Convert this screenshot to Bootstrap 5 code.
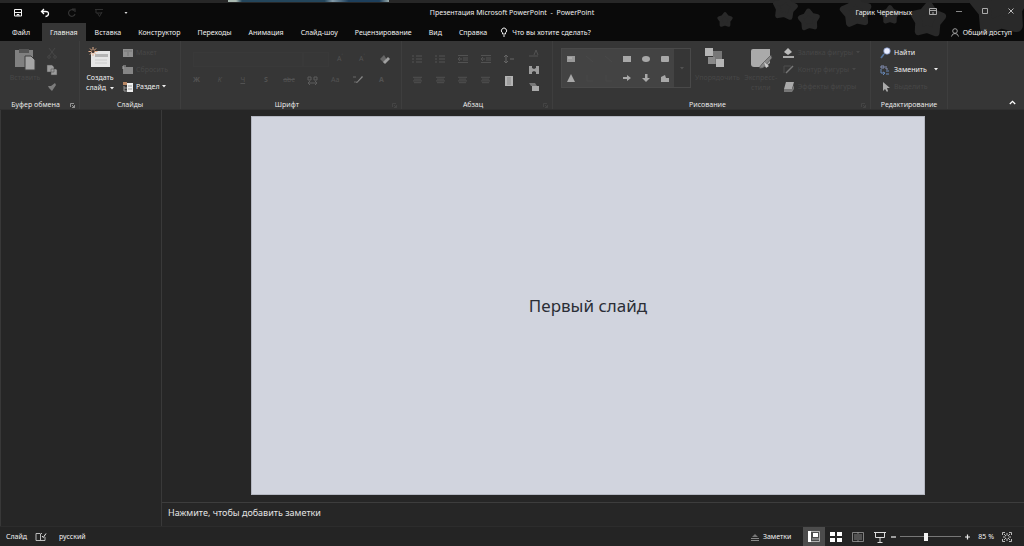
<!DOCTYPE html>
<html lang="ru">
<head>
<meta charset="utf-8">
<meta name="viewport" content="width=device-width, initial-scale=1">
<title>Презентация Microsoft PowerPoint - PowerPoint</title>
<link href="https://cdn.jsdelivr.net/npm/bootstrap@5.3.0/dist/css/bootstrap.min.css" rel="stylesheet">
<style>
  body { font-family: "Noto Sans", "Open Sans", sans-serif; font-size: 7px; line-height: 10px; background: #262626; color: #f0f0f0; }
  button, select, input, a { font: inherit; }
  svg { display: block; flex: none; }
  .tool { background: none; border: 0; padding: 0; color: inherit; display: flex; align-items: center; justify-content: center; border-radius: 0; }
  .desk-strip { height: 3px; background: #272727; }
  .desk-strip span { display: block; width: 161px; height: 2px; margin-left: 228px; background: linear-gradient(90deg, #a9b8b0 0 8px, #24465c 14px 60%, #8199a6 65%, #1d3f5c 75% 94%, #9aa); }
  .top { background: #0a0a0a; position: relative; }
  .stars { position: absolute; right: 0; top: 0; }
  .titlebar { height: 20px; position: relative; display: grid; grid-template-columns: 1fr auto 1fr; }
  .window-title { white-space: pre; }
  .quick { gap: 17px; padding-left: 13px; }
  .quick svg { width: 10px; height: 10px; }
  .tabs { height: 18px; position: relative; padding-left: 4px; }
  .tabs a { color: #f0f0f0; text-decoration: none; padding: 0 8px; line-height: 19px; margin-right: 1px; }
  .tabs a.active { background: #363636; }
  .tabs a.hint { padding-left: 4px; }
  .ribbon { background: #363636; height: 69px; border-bottom: 1px solid #303030; }
  .group { border-right: 1px solid #3e3e3e; padding-top: 3px; }
  .group-body { height: 56px; }
  .group-name { height: 10px; line-height: 9px; position: relative; text-align: center; font-family: "Open Sans", sans-serif; }
  .launch { position: absolute; right: 4px; top: 3px; }
  .g-clip { width: 80px; } .g-slides { width: 101px; } .g-font { width: 221px; } .g-par { width: 151px; } .g-draw { width: 318px; } .g-edit { width: 77px; }
  .stack3 { display: grid; grid-template-rows: repeat(3, 17px); justify-items: start; align-content: start; }
  .stack3 .tool { gap: 3px; }
  .g-slides .stack3 { padding-left: 6px; }
  .g-slides .stack3 .tool { gap: 2px; }
  .big { flex-direction: column; justify-content: flex-start; padding-top: 3px; }
  .off { color: #474747; }
  .faint { color: #525252; }
  .toolrow { display: grid; height: 24px; align-items: center; justify-items: center; }
  .toolrow.upper { padding-top: 6px; }
  .toolrow.lower { height: 24px; }
  .font-top { grid-template-columns: 110px 26px 22px 22px 23px; padding-left: 4px; }
  .cols5 { grid-template-columns: repeat(5, 1fr); }
  .cols9 { grid-template-columns: repeat(9, 1fr); }
  .combo { background: #373737; border: 1px solid #393939; height: 15px; color: #373737; appearance: none; padding: 0; border-radius: 0; width: 100%; }
  .gallery { height: 40px; width: 130px; border: 1px solid #494949; margin-top: 4px; }
  .shapes { width: 112px; background: #434343; display: grid; grid-template-columns: repeat(6, 1fr); place-items: center; color: #a8a8a8; }
  .side { width: 162px; border-right: 1px solid #393939; border-left: 1px solid #383838; }
  .canvas-area { padding: 6px 10px 7px 0; min-height: 0; }
  .slide { height: 100%; aspect-ratio: 16 / 9; background: #d1d4de; border: 1px solid #b4b7c1; color: #2b2e36; font-size: 17px; line-height: 24px; }
  .notes { height: 24px; border: 0; border-top: 1px solid #3d3d3d; border-radius: 0; background: #262626; color: #e4e4e4; padding: 0 6px 4px; font-size: 9px; width: 100%; outline: 0; }
  .notes::placeholder { color: #e4e4e4; opacity: 1; }
  .status { height: 20px; background: #242424; border-top: 1px solid #2c2c2c; padding: 0 12px 0 6px; }
  .status .view { width: 22px; height: 19px; }
  .status .view.active { background: #4c4c4c; }
  .zoom { appearance: none; width: 61px; height: 10px; background: linear-gradient(#777, #777) center / 100% 1px no-repeat; margin: 0; }
  .zoom::-webkit-slider-thumb { appearance: none; width: 4px; height: 8px; background: #f4f4f4; border: 0; }
</style>
</head>
<body>
<svg width="0" height="0" class="position-absolute" aria-hidden="true">
  <defs>
    <path id="star" d="M0-8L2.900-4 7.600-2.500 4.800 1.500 4.700 6.500 0 5-4.700 6.500-4.800 1.500-7.600-2.500-2.900-4Z" stroke="#292929" stroke-width="4" stroke-linejoin="round"/>
    <symbol id="lines" viewBox="0 0 10 8"><path d="M0 1h10M1 3h8M0 5h10M1 7h8" stroke="currentColor" stroke-width="1"/></symbol>
    <symbol id="bullets" viewBox="0 0 10 8"><path d="M0 1h2M0 4h2M0 7h2M4 1h6M4 4h6M4 7h6" stroke="currentColor"/></symbol>
    <symbol id="indent" viewBox="0 0 10 8"><path d="M0 .5h10M5 3h5M5 5h5M0 7.500h10M4 4H0M2 2L0 4l2 2" stroke="currentColor" fill="none"/></symbol>
    <symbol id="caret" viewBox="0 0 4 3"><path d="M0 0h4L2 2.500z" fill="currentColor"/></symbol>
    <symbol id="corner" viewBox="0 0 5 5"><path d="M.5 4V.5H4M2 2l2.500 2.500M4.500 2v2.500H2" stroke="currentColor" fill="none" stroke-width=".8"/></symbol>
  </defs>
</svg>
<div class="d-flex flex-column vh-100">
  <header class="top">
    <div class="desk-strip"><span></span></div>
    <svg class="stars" width="344" height="41" viewBox="0 0 344 41" fill="#292929" aria-hidden="true">
      <use href="#star" transform="translate(45 20) scale(.8)"/>
      <use href="#star" transform="translate(105 8) rotate(8) scale(1.300)"/>
      <use href="#star" transform="translate(129 20) rotate(-4) scale(1.150)"/>
      <use href="#star" transform="translate(176 12) rotate(-6) scale(1.650)"/>
      <use href="#star" transform="translate(210 15) scale(1)"/>
      <use href="#star" transform="translate(248 20) rotate(4) scale(1.850)"/>
      <use href="#star" transform="translate(320 6) rotate(-4) scale(3.200)"/>
    </svg>
    <div class="titlebar align-items-center">
      <div class="quick d-flex align-items-center">
        <button class="tool" aria-label="Сохранить"><svg viewBox="0 0 10 10" fill="none" stroke="#f4f4f4"><path d="M1.500 1.500h7v6.500h-7zM2 4.500h6M4 8V6.500h2V8"/></svg></button>
        <button class="tool" aria-label="Отменить"><svg viewBox="0 0 10 10" fill="none" stroke="#fff" stroke-width="1.300"><path d="M4 1L1.500 3.500 4 6M2 3.500h3.500q3 0 3 2.300T5.500 8.500"/></svg></button>
        <button class="tool" aria-label="Повторить"><svg viewBox="0 0 10 10" fill="none" stroke="#333" stroke-width="1.200"><path d="M7 2.500A3.300 3.300 0 1 0 8 6M5 1h3v3"/></svg></button>
        <button class="tool" aria-label="Показ"><svg viewBox="0 0 10 10" fill="none" stroke="#303030"><path d="M1 1.500h8M2 2v3h6M3.500 5l2 3.500L8 4"/></svg></button>
        <button class="tool" aria-label="Настройка панели"><svg viewBox="0 0 10 10"><path d="M3.500 4h3L5 6z" fill="#ddd"/></svg></button>
      </div>
      <div class="window-title text-center">Презентация Microsoft PowerPoint  -  PowerPoint</div>
      <div class="d-flex align-items-center justify-content-end gap-3 pe-2">
        <span>Гарик Черемных</span>
        <button class="tool" aria-label="Параметры ленты"><svg width="10" height="10" fill="none" stroke="#aaa"><path d="M1.500 .5h7v6h-7zM2 2.500h6M5 6V4"/></svg></button>
        <button class="tool" aria-label="Свернуть"><svg width="10" height="10"><path d="M2 3.500h6" stroke="#888"/></svg></button>
        <button class="tool" aria-label="Развернуть"><svg width="10" height="10" fill="none" stroke="#aaa"><path d="M2.500 .5h5v5h-5z"/></svg></button>
        <button class="tool" aria-label="Закрыть"><svg width="10" height="10" stroke="#ccc" stroke-width=".9"><path d="M2.500 .5l5 5M7.500 .5l-5 5"/></svg></button>
      </div>
    </div>
    <nav class="tabs d-flex">
      <a href="#" class="me-1">Файл</a><a href="#" class="active">Главная</a><a href="#">Вставка</a><a href="#">Конструктор</a><a href="#">Переходы</a><a href="#">Анимация</a><a href="#">Слайд-шоу</a><a href="#">Рецензирование</a><a href="#">Вид</a><a href="#">Справка</a>
      <a href="#" class="hint d-flex align-items-center gap-1"><svg width="8" height="10" fill="none" stroke="#eee"><path d="M2.500 7V5.800A2.600 2.600 0 1 1 5.500 5.800V7zM3 9h2"/></svg>Что вы хотите сделать?</a>
      <a href="#" class="d-flex align-items-center gap-1 ms-auto pe-2 me-1"><svg width="8" height="9" fill="none" stroke="#aaa" stroke-width=".9"><circle cx="4" cy="3" r="2.300"/><path d="M.5 8.500Q1 5.500 4 5.500T7.500 8.500"/></svg>Общий доступ</a>
    </nav>
  </header>

  <section class="ribbon d-flex" aria-label="Главная">
    <div class="group g-clip">
      <div class="group-body d-flex">
        <button class="tool big off ms-2"><svg width="34" height="26" viewBox="0 0 34 26"><path d="M7 3h18v17H7z" fill="#808080"/><path d="M11 2h10v4H11z" fill="#555"/><path d="M17 9h6l4 4v10H17z" fill="#a4a4a4" stroke="#3e3e3e"/></svg><span>Вставить</span></button>
        <div class="stack3 ps-1">
          <button class="tool off h-100" aria-label="Вырезать"><svg width="12" height="12" fill="none" stroke="currentColor"><path d="M3 1l6 8M9 1L3 9"/><circle cx="3" cy="10" r="1.300"/><circle cx="9" cy="10" r="1.300"/></svg></button>
          <button class="tool h-100" aria-label="Копировать"><svg width="12" height="12" fill="#9b9b9b" stroke="#4a4a4a" stroke-width=".5"><path d="M1 1h5l2 2v5H1zM5 5h5l1 1v5H5z"/></svg></button>
          <button class="tool h-100" aria-label="Формат по образцу"><svg width="12" height="12" fill="#7c7c7c"><path d="M2 5l3 0 4-3 1 2-2 3-2 3-3-3z"/></svg></button>
        </div>
      </div>
      <div class="group-name pe-2">Буфер обмена<svg class="launch" width="5" height="5" color="#aaa"><use href="#corner"/></svg></div>
    </div>

    <div class="group g-slides">
      <div class="group-body d-flex">
        <button class="tool big ps-1"><svg width="32" height="26" viewBox="0 0 32 26"><path d="M7 4h19v16H7z" fill="#e6e6e6"/><path d="M11 7h13v3H11z" fill="#b4b4b4"/><path d="M11 13h12M11 16h12" stroke="#ccc"/><path d="M9 0v9M4.500 4.500h9M6 1.500l6 6M12 1.500l-6 6" stroke="#e7b08c"/><circle cx="9" cy="4.500" r="1.500" fill="#403530"/></svg><span>Создать</span><span class="d-flex align-items-center gap-1">слайд<svg width="4" height="3"><use href="#caret"/></svg></span></button>
        <div class="stack3">
          <button class="tool off h-100"><svg width="12" height="10"><path d="M1 1h10v8H1z" fill="#909090"/><path d="M2 3h8M6 4v4" stroke="#777"/></svg>Макет</button>
          <button class="tool off h-100"><svg width="12" height="10"><path d="M1 2h10v7H1z" fill="#858585"/><path d="M1 4V1h3" stroke="#aaa" fill="none"/></svg>Сбросить</button>
          <button class="tool h-100"><svg width="12" height="12"><path d="M5 2h6v9H5z" fill="#eee"/><path d="M1 1h4v3H1z" fill="#b98764"/><path d="M6 5h4M6 8h4" stroke="#999"/><path d="M2 5v5h3M2 7h3" stroke="#999" fill="none"/></svg>Раздел<svg width="4" height="3"><use href="#caret"/></svg></button>
        </div>
      </div>
      <div class="group-name">Слайды</div>
    </div>

    <div class="group g-font">
      <div class="group-body faint ps-1 pe-2">
        <div class="toolrow upper font-top ms-1">
          <select class="combo" aria-label="Шрифт"><option></option></select>
          <select class="combo" aria-label="Размер"><option></option></select>
          <button class="tool" aria-label="Увеличить">A<sup>˄</sup></button>
          <button class="tool" aria-label="Уменьшить">A<sup>˅</sup></button>
          <button class="tool" aria-label="Очистить"><svg width="12" height="11"><path d="M1 5l4-4 3 5-3 3z" fill="#666"/><path d="M4 8l5-5 2 2-5 5z" fill="#a0a0a0"/></svg></button>
        </div>
        <div class="toolrow lower cols9">
          <button class="tool fw-bold">Ж</button><button class="tool fst-italic">К</button><button class="tool text-decoration-underline">Ч</button><button class="tool fw-bold">S</button><button class="tool text-decoration-line-through">abc</button><button class="tool" aria-label="Интервал"><svg width="11" height="9" fill="none" stroke="#5c5c5c"><path d="M1 1h3v3H1zM7 1h3v3H7zM1 7h9M3 5L1 7l2 2M8 5l2 2-2 2"/></svg></button><button class="tool">Aa</button><button class="tool" aria-label="Выделение"><svg width="12" height="10"><path d="M1 2h3M2 7h3" stroke="#666"/><path d="M4 8l6-7 1 1-6 6z" fill="#888"/></svg></button><button class="tool fw-bold">А</button>
        </div>
      </div>
      <div class="group-name pe-2">Шрифт<svg class="launch off" width="5" height="5"><use href="#corner"/></svg></div>
    </div>

    <div class="group g-par">
      <div class="group-body d-flex faint ps-1">
        <div class="flex-fill">
          <div class="toolrow upper cols5">
            <button class="tool" aria-label="Маркеры"><svg width="10" height="8"><use href="#bullets"/></svg></button><button class="tool" aria-label="Нумерация"><svg width="10" height="8"><use href="#bullets"/></svg></button><button class="tool" aria-label="Уменьшить отступ"><svg width="10" height="8"><use href="#indent"/></svg></button><button class="tool" aria-label="Увеличить отступ"><svg width="10" height="8"><use href="#indent"/></svg></button><button class="tool" aria-label="Интервал"><svg width="11" height="10" fill="none" stroke="#666"><path d="M3 1v8M1 3l2-2 2 2M1 7l2 2 2-2M7 5h4"/></svg></button>
          </div>
          <div class="toolrow lower cols5">
            <button class="tool" aria-label="По левому краю"><svg width="9" height="8"><use href="#lines"/></svg></button><button class="tool" aria-label="По центру"><svg width="9" height="8"><use href="#lines"/></svg></button><button class="tool" aria-label="По правому краю"><svg width="9" height="8"><use href="#lines"/></svg></button><button class="tool" aria-label="По ширине"><svg width="9" height="8"><use href="#lines"/></svg></button><button class="tool" aria-label="Колонки"><svg width="10" height="11"><path d="M1 1h8v10H1z" fill="#b4b4b4"/><path d="M3 3h4M3 5h4M3 7h4M3 9h4" stroke="#888"/></svg></button>
          </div>
        </div>
        <div class="stack3 ps-2 pe-2 me-1">
          <button class="tool h-100" aria-label="Направление текста"><svg width="12" height="10" fill="none" stroke="currentColor"><path d="M1 8h9M6 7l2-5 2 5"/></svg></button>
          <button class="tool h-100" aria-label="Выровнять текст"><svg width="12" height="10" fill="#9c9c9c"><path d="M1 1h3v8H1zM8 1h3v8H8zM4 3l2 1 2-1v4L6 6 4 7z"/></svg></button>
          <button class="tool h-100" aria-label="SmartArt"><svg width="12" height="10"><path d="M1 1h6l2 3H3z" fill="#777"/><path d="M4 4h7v5H4z" fill="#aaa"/></svg></button>
        </div>
      </div>
      <div class="group-name pe-2">Абзац<svg class="launch off" width="5" height="5"><use href="#corner"/></svg></div>
    </div>

    <div class="group g-draw">
      <div class="group-body d-flex ps-2">
        <div class="gallery d-flex">
          <div class="shapes">
            <svg width="10" height="8"><path d="M1 1h8v6H1z" fill="#999"/><path d="M2 3h4" stroke="#bbb"/></svg>
            <svg width="10" height="8" stroke="#494949"><path d="M1 1l7 6"/></svg>
            <svg width="10" height="8" stroke="#494949"><path d="M1 1l7 6"/></svg>
            <svg width="10" height="8" fill="currentColor"><path d="M1 1h8v6H1z"/></svg>
            <svg width="10" height="8" fill="currentColor"><ellipse cx="5" cy="4" rx="4" ry="3"/></svg>
            <svg width="10" height="8" fill="currentColor"><rect x="1" y="1" width="8" height="6" rx="1"/></svg>
            <svg width="10" height="8" fill="currentColor"><path d="M5 0l4 8H1z"/></svg>
            <svg width="10" height="8" stroke="#494949" fill="none"><path d="M2 1v6h6"/></svg>
            <svg width="10" height="8" stroke="#494949" fill="none"><path d="M2 1v6h6"/></svg>
            <svg width="10" height="8" fill="currentColor"><path d="M1 3h4V1l4 3-4 3V5H1z"/></svg>
            <svg width="10" height="8" fill="currentColor"><path d="M4 0h2.500v4H9L5 8 1 4h3z"/></svg>
            <svg width="10" height="8" fill="currentColor"><path d="M1 3l4-2 1 3 3 0v4H1z"/></svg>
          </div>
          <button class="tool faint flex-fill" aria-label="Другие фигуры"><svg width="4" height="3"><use href="#caret"/></svg></button>
        </div>
        <button class="tool big off ms-1"><svg width="42" height="26" viewBox="0 0 42 26"><path d="M17 4h9v13h-9z" fill="#777"/><path d="M9 1h8v8H9zM20 12h8v8h-8z" fill="#b5b5b5"/><path d="M12 10h7v7h-7z" fill="#898989"/></svg><span>Упорядочить</span></button>
        <button class="tool big off ms-1"><svg width="34" height="26" viewBox="0 0 34 26"><path d="M9 2h17v14l-5 4H10q-3 0-3-3V4q0-2 2-2z" fill="#aaa"/><path d="M27 8l-9 9-3 4q4 1 6-2l7-8z" fill="#888" stroke="#444" stroke-width=".6"/><path d="M20 15l5 4-3 2" fill="#ccc"/></svg><span>Экспресс-</span><span>стили</span></button>
        <div class="stack3 ps-1">
          <button class="tool off h-100"><svg width="13" height="12"><path d="M6 1l4 4-4 3-4-3z" fill="#bbb"/><path d="M1 9h11v2H1z" fill="#aaa"/></svg>Заливка фигуры<svg width="4" height="3"><use href="#caret"/></svg></button>
          <button class="tool off h-100"><svg width="13" height="12"><path d="M2 9V2h7" fill="none" stroke="#4c4c4c"/><path d="M4 9l7-7" stroke="#777" stroke-width="1.500"/></svg>Контур фигуры<svg width="4" height="3"><use href="#caret"/></svg></button>
          <button class="tool off h-100"><svg width="13" height="12"><path d="M4 1h8l-2 7H2z" fill="#aaa"/><path d="M2 8h8l2-4v4l-2 3H2z" fill="#777"/></svg>Эффекты фигуры</button>
        </div>
      </div>
      <div class="group-name pe-2">Рисование<svg class="launch off" width="5" height="5"><use href="#corner"/></svg></div>
    </div>

    <div class="group g-edit">
      <div class="group-body ps-2">
        <div class="stack3">
          <button class="tool h-100"><svg width="12" height="12"><circle cx="8" cy="4" r="3.300" fill="#e8edff" stroke="#6f83b5" stroke-width=".7"/><path d="M5 7L2 11" stroke="#54749f" stroke-width="1.700"/></svg>Найти</button>
          <button class="tool h-100"><svg width="12" height="12" fill="none"><path d="M2 2h3v2H2zM7 2v3h2" stroke="#8490b4"/><path d="M2 5v4h3M4 8l2 1-2 2M7 7h3M7 10h3" stroke="#6688b8"/></svg>Заменить<svg class="ms-1" width="4" height="3"><use href="#caret"/></svg></button>
          <button class="tool off h-100"><svg width="12" height="12"><path d="M4 1v9l2-2 2 3 1-1-1-3h3z" fill="#aaa"/></svg>Выделить</button>
        </div>
      </div>
      <div class="group-name">Редактирование</div>
    </div>
    <button class="tool ms-auto mt-auto me-2 mb-1" aria-label="Свернуть ленту"><svg width="7" height="5" fill="none" stroke="#fff" stroke-width="1.300"><path d="M.8 4L3.500 1.300 6.200 4"/></svg></button>
  </section>

  <main class="d-flex flex-fill" style="min-height:0">
    <aside class="side flex-shrink-0" aria-label="Эскизы слайдов"></aside>
    <div class="d-flex flex-column flex-fill">
      <div class="canvas-area flex-fill d-flex justify-content-center">
        <div class="slide d-flex align-items-center justify-content-center">Первый слайд</div>
      </div>
      <input class="notes flex-shrink-0" type="text" aria-label="Заметки к слайду" placeholder="Нажмите, чтобы добавить заметки">
    </div>
  </main>

  <footer class="status d-flex align-items-center">
    <span>Слайд</span>
    <button class="tool ms-2" aria-label="Правописание"><svg width="12" height="10" fill="none" stroke="#ccc" stroke-width=".9"><path d="M10 5v3.500H6L5.500 9 5 8.500H1v-7h4l.5.500.5-.5h1M5.500 2v7"/><path d="M7 4l1.300 1.500L11 1.500" stroke="#fff"/></svg></button>
    <button class="tool ms-2 ps-1">русский</button>
    <button class="tool ms-auto gap-1 me-2"><svg width="8" height="8"><path d="M1 4l3-3 3 3z" fill="#777"/><path d="M0 5.500h8M0 7.500h8" stroke="#888"/></svg>Заметки</button>
    <button class="tool view active ms-1" aria-label="Обычный"><svg width="12" height="12" fill="none" stroke="#ccc" stroke-width=".8"><path d="M1 .5h10.500v10H1zM4 8h8"/><path d="M0 0h3v11H0zM5 2h5v4H5z" fill="#fff" stroke="none"/></svg></button>
    <button class="tool view" aria-label="Сортировщик"><svg width="12" height="12" fill="#fff"><path d="M0 1h5v4H0zM7 1h5v4H7zM0 7h5v4H0zM7 7h5v4H7z"/></svg></button>
    <button class="tool view" aria-label="Режим чтения"><svg width="12" height="12" fill="none" stroke="#999" stroke-width=".8"><path d="M.5 1.500h11v9H.5zM6 1v10M2 4h3M7 4h3M2 6h3M7 6h3M2 8h3M7 8h3"/></svg></button>
    <button class="tool view" aria-label="Показ слайдов"><svg width="12" height="12" fill="none" stroke="#ddd"><path d="M0 1.500h12M1.500 2v4.500h9V2M6 7v4M3.500 11.500h5"/></svg></button>
    <div class="d-flex align-items-center gap-1">
      <button class="tool" aria-label="Уменьшить"><svg width="5" height="6"><path d="M0 3h5" stroke="#eee" stroke-width="1.200"/></svg></button>
      <input class="zoom" type="range" min="0" max="100" value="42" aria-label="Масштаб">
      <button class="tool" aria-label="Увеличить"><svg width="5" height="6"><path d="M0 3h5M2.500 .5v5" stroke="#eee" stroke-width="1.200"/></svg></button>
    </div>
    <span class="ms-2">85 %</span>
    <button class="tool ms-2" aria-label="Вписать"><svg width="10" height="10" fill="none" stroke="#ccc" stroke-width=".9"><path d="M.5 3V.5H3M7 .5h2.500V3M9.500 7v2.500H7M3 9.500H.5V7M5 1v2.500M5 6.500V9M1 5h2.500M6.500 5H9M2 2l2 2M8 2L6 4M2 8l2-2M8 8L6 6"/></svg></button>
  </footer>
</div>
<script src="https://cdn.jsdelivr.net/npm/bootstrap@5.3.0/dist/js/bootstrap.bundle.min.js"></script>
</body>
</html>
